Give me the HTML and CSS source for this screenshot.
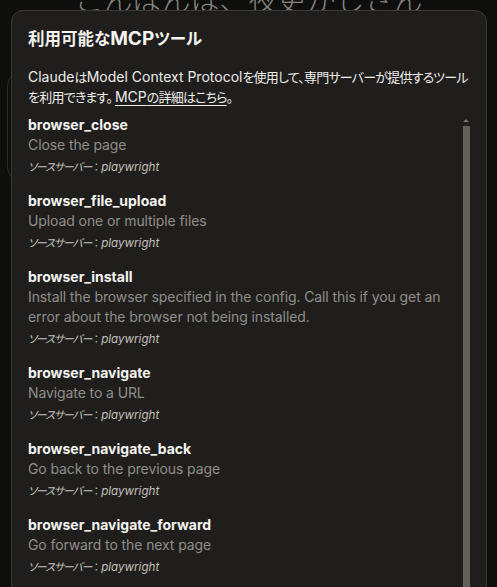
FILE: index.html
```html
<!DOCTYPE html>
<html lang="ja">
<head>
<meta charset="utf-8">
<title>利用可能なMCPツール</title>
<link rel="stylesheet" href="styles.css">
</head>
<body>
<div class="backdrop">
  <h1 class="greeting">こんばんは、夜更かしさん</h1>
  <div class="composer"></div>
</div>
<div class="modal">
  <h2 class="title"><span class="jp">利用可能な</span>MCP<span class="jp">ツール</span></h2>
  <p class="intro">Claude<span class="jp">は</span>Model Context Protocol<span class="jp">を使用して、専門サーバーが提供するツールを利用できます</span><span class="jp stop">。</span><a class="link" href="#">MCP<span class="jp">の詳細はこちら</span></a><span class="jp">。</span></p>
  <div class="scroll">
    <ul class="tools">
      <li class="tool">
        <div class="name">browser_close</div>
        <div class="desc">Close the page</div>
        <div class="src"><span class="jp">ソースサーバー</span><span class="colon">：</span>playwright</div>
      </li>
      <li class="tool">
        <div class="name">browser_file_upload</div>
        <div class="desc">Upload one or multiple files</div>
        <div class="src"><span class="jp">ソースサーバー</span><span class="colon">：</span>playwright</div>
      </li>
      <li class="tool">
        <div class="name">browser_install</div>
        <div class="desc">Install the browser specified in the config. Call this if you get an error about the browser not being installed.</div>
        <div class="src"><span class="jp">ソースサーバー</span><span class="colon">：</span>playwright</div>
      </li>
      <li class="tool">
        <div class="name">browser_navigate</div>
        <div class="desc">Navigate to a URL</div>
        <div class="src"><span class="jp">ソースサーバー</span><span class="colon">：</span>playwright</div>
      </li>
      <li class="tool">
        <div class="name">browser_navigate_back</div>
        <div class="desc">Go back to the previous page</div>
        <div class="src"><span class="jp">ソースサーバー</span><span class="colon">：</span>playwright</div>
      </li>
      <li class="tool">
        <div class="name">browser_navigate_forward</div>
        <div class="desc">Go forward to the next page</div>
        <div class="src"><span class="jp">ソースサーバー</span><span class="colon">：</span>playwright</div>
      </li>
      <li class="tool">
        <div class="name">browser_navigate_reload</div>
        <div class="desc">Reload the page</div>
        <div class="src"><span class="jp">ソースサーバー</span><span class="colon">：</span>playwright</div>
      </li>
    </ul>
    <div class="scrollbar">
      <div class="arrow"></div>
      <div class="thumb"></div>
    </div>
  </div>
</div>
</body>
</html>
```
FILE: styles.css
```css
html, body {
  margin: 0;
  padding: 0;
}
body {
  width: 497px;
  height: 587px;
  overflow: hidden;
  position: relative;
  background: #0e0e0d;
  font-family: Inter, "Noto Sans CJK JP", sans-serif;
  color: #f2f1ec;
}
.backdrop {
  display: flex;
  flex-direction: column;
  align-items: flex-start;
}
.greeting {
  margin: -16px 0 0 0;
  align-self: center;
  font-family: "Noto Sans CJK JP", sans-serif;
  font-weight: 300;
  font-size: 29px;
  line-height: 29px;
  color: #86847f;
}
.composer {
  margin: 57px 0 0 7px;
  width: 470px;
  height: 113px;
  border: 1px solid #2c2c2a;
  border-radius: 16px;
  box-sizing: border-box;
}
.modal {
  position: absolute;
  left: 11px;
  top: 10px;
  width: 476px;
  height: 620px;
  box-sizing: border-box;
  background: #1f1e1d;
  border: 1px solid #3a3936;
  border-radius: 12px;
  padding: 14px 16px 0 16px;
  display: flex;
  flex-direction: column;
}
.jp {
  font-family: "Noto Sans CJK JP", sans-serif;
  font-feature-settings: "palt";
  line-height: 1;
}
.title {
  margin: 0;
  font-size: 19px;
  line-height: 28px;
  font-weight: 700;
  color: #f4f3ef;
}
.title .jp {
  font-size: 16.5px;
}
.intro {
  margin: 14px 0 0 0;
  font-size: 14px;
  line-height: 20px;
  color: #eeede8;
}
.intro .jp {
  font-size: 13px;
  letter-spacing: -0.8px;
}
.intro .stop {
  margin-right: 3px;
}
.link {
  color: #eeede8;
  text-decoration: underline;
  text-decoration-thickness: 1px;
  text-underline-offset: 3px;
}
.scroll {
  margin-top: 8px;
  display: flex;
  align-items: flex-start;
}
.tools {
  list-style: none;
  margin: 0;
  padding: 0;
  flex: 1;
  min-width: 0;
}
.tool {
  margin-bottom: 14px;
}
.name {
  font-size: 14px;
  line-height: 20px;
  font-weight: 700;
  color: #f4f3ef;
}
.desc {
  font-size: 14px;
  line-height: 20px;
  letter-spacing: -0.1px;
  color: #8f8e88;
}
.src {
  margin-top: 2px;
  font-size: 11.6px;
  line-height: 20px;
  font-style: italic;
  color: #c4c2ba;
}
.src .jp {
  font-size: 11px;
  letter-spacing: -1.2px;
}
.colon {
  font-family: "Noto Sans CJK JP", sans-serif;
  font-style: normal;
  font-size: 10px;
  line-height: 1;
}
.scrollbar {
  width: 8px;
  display: flex;
  flex-direction: column;
  align-items: center;
  padding-top: 4px;
  align-self: stretch;
}
.arrow {
  width: 0;
  height: 0;
  border-left: 3px solid transparent;
  border-right: 3px solid transparent;
  border-bottom: 3px solid #76756f;
  margin-bottom: 4px;
}
.thumb {
  width: 7px;
  flex: 1;
  background: #62625b;
}
```
